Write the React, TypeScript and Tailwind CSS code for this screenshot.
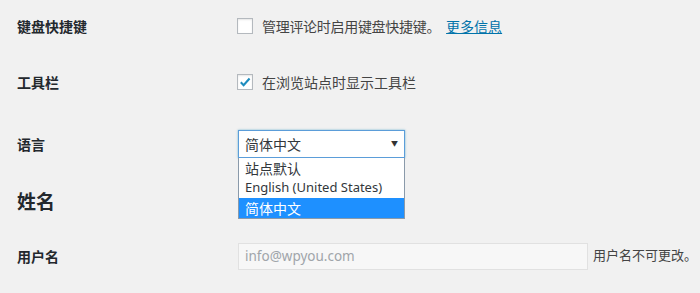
import React from "react";

function Check() {
  return (
    <svg width="14" height="14" viewBox="0 0 20 20" className="block">
      <path d="M4 10.5 L8 14.5 L16.5 5" fill="none" stroke="#1e8cbe" strokeWidth="3" strokeLinecap="butt" strokeLinejoin="miter" />
    </svg>
  );
}

export default function App() {
  return (
    <div
      className="w-[700px] h-[293px] overflow-hidden bg-[#f1f1f1] pl-[17px] text-[14px] text-[#444] whitespace-nowrap"
      style={{ fontFamily: '"Noto Sans", "Noto Sans CJK SC", sans-serif' }}
    >
      {/* row 1 */}
      <div className="flex items-center h-[52px]">
        <div className="w-[220px] shrink-0 font-bold text-[#23282d]">键盘快捷键</div>
        <div className="flex items-center">
          <span className="w-[16px] h-[16px] border border-[#b4b9be] bg-white shadow-[inset_0_1px_2px_rgba(0,0,0,0.1)]" />
          <span className="ml-[9px] tracking-[-0.3px]">管理评论时启用键盘快捷键。</span>
          <a className="ml-[6px] text-[#0073aa] underline">更多信息</a>
        </div>
      </div>
      {/* row 2 */}
      <div className="flex items-center h-[60px]">
        <div className="w-[220px] shrink-0 font-bold text-[#23282d]">工具栏</div>
        <div className="flex items-center">
          <span className="w-[16px] h-[16px] border border-[#b4b9be] bg-white shadow-[inset_0_1px_2px_rgba(0,0,0,0.1)] flex items-center justify-center">
            <Check />
          </span>
          <span className="ml-[9px]">在浏览站点时显示工具栏</span>
        </div>
      </div>
      {/* row 3 */}
      <div className="flex items-center h-[64px]">
        <div className="w-[221px] shrink-0 font-bold text-[#23282d]">语言</div>
        <div className="relative">
          <div className="w-[167px] h-[28px] border border-[#5b9dd9] bg-white shadow-[0_0_2px_rgba(30,140,190,0.6)] flex items-center justify-between pl-[6px] pr-[6px] text-[#32373c]">
            <span>简体中文</span>
            <span className="text-[7px] text-[#333]">▼</span>
          </div>
          <div className="absolute left-0 top-full w-[167px] border border-[#8a9aaa] border-t-0 bg-white text-[#32373c] z-10">
            <div className="h-[20px] flex items-center pl-[6px]">站点默认</div>
            <div className="h-[20px] flex items-center pl-[6px] text-[13px]">English (United States)</div>
            <div className="h-[20px] flex items-center pl-[6px] bg-[#1e90ff] text-white">简体中文</div>
          </div>
        </div>
      </div>
      {/* 姓名 */}
      <div className="flex items-center h-[52px]">
        <h2 className="text-[19px] font-bold text-[#23282d]">姓名</h2>
      </div>
      {/* row 5 */}
      <div className="flex items-center h-[56px]">
        <div className="w-[221px] shrink-0 font-bold text-[#23282d]">用户名</div>
        <div className="w-[350px] shrink-0 h-[27px] border border-[#e1e1e1] bg-[#f7f7f7] flex items-center pl-[6px] text-[13.5px] text-[#a0a5aa]">
          info@wpyou.com
        </div>
        <span className="ml-[5px] text-[13px]">用户名不可更改。</span>
      </div>
    </div>
  );
}
